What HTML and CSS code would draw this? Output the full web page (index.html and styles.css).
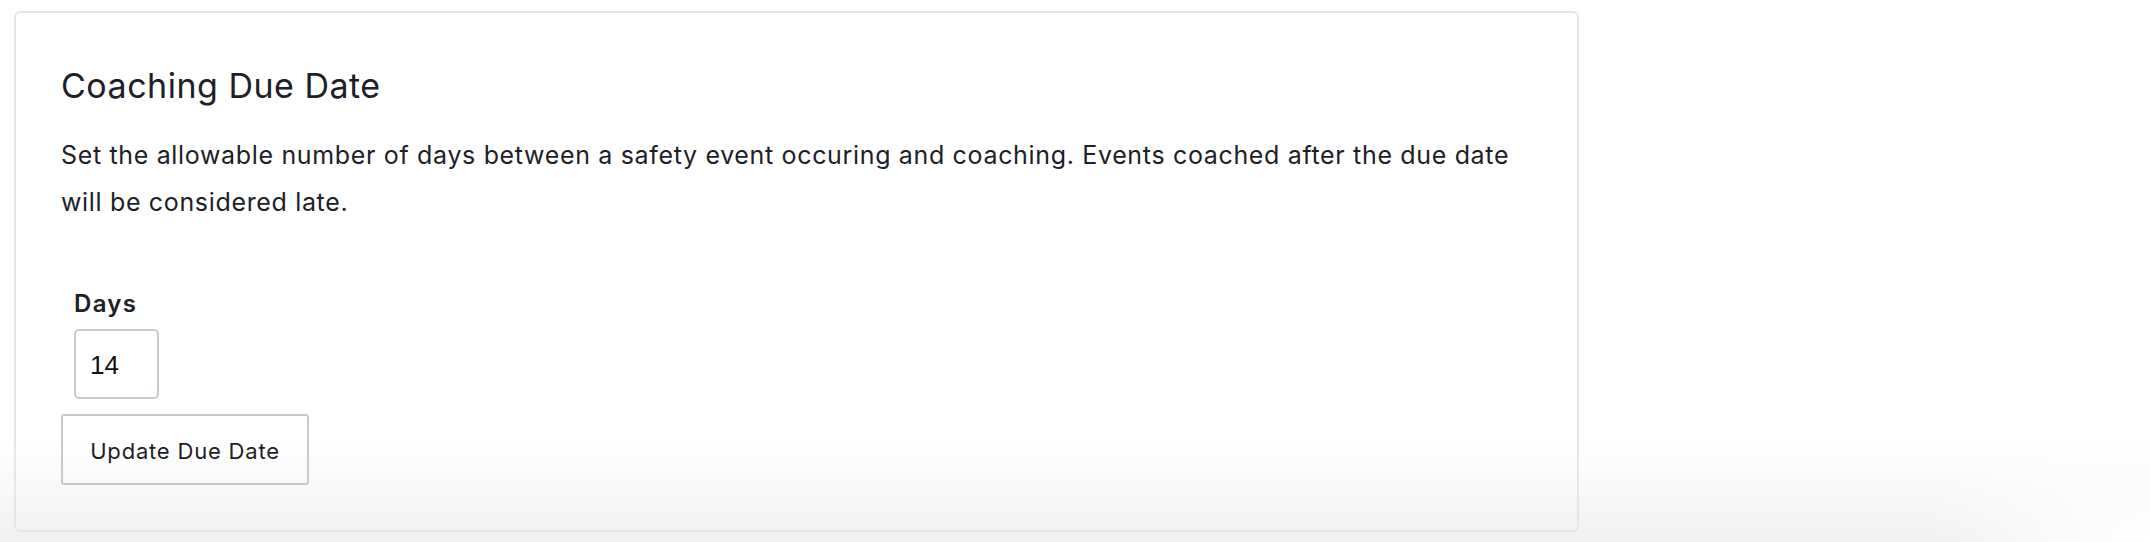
FILE: index.html
```html
<!DOCTYPE html>
<html lang="en">
<head>
<meta charset="utf-8">
<title>Coaching Due Date</title>
<link rel="stylesheet" href="styles.css">
</head>
<body>
  <main class="page">
    <section class="card">
      <h2 class="card-title">Coaching Due Date</h2>
      <p class="card-desc">Set the allowable number of days between a safety event occuring and coaching. Events coached after the due date will be considered late.</p>
      <div class="field">
        <label class="field-label" for="days">Days</label>
        <input class="field-input" id="days" type="text" value="14">
      </div>
      <button class="btn" type="button">Update Due Date</button>
    </section>
  </main>
</body>
</html>
```

FILE: styles.css
```css
html {
  height: 100%;
}

body {
  margin: 0;
  min-height: 542px;
  font-family: Inter, Roboto, "Liberation Sans", Arial, sans-serif;
  color: #1d2127;
  background:
    radial-gradient(ellipse 230px 130px at 100% 100%, #ffffff 0%, rgba(255,255,255,0) 100%),
    linear-gradient(to bottom, #ffffff 0, #ffffff 440px, #f1f1f1 542px);
  background-repeat: no-repeat;
  background-size: 100% 542px;
}

.page {
  padding: 11px 0 0 14px;
}

.card {
  box-sizing: border-box;
  width: 1565px;
  border: 2px solid #e3e6ea;
  border-radius: 6px;
  padding: 53px 45px 45px 45px;
  display: flex;
  flex-direction: column;
  align-items: flex-start;
}

.card-title {
  margin: 0;
  font-size: 34px;
  line-height: 40px;
  font-weight: 400;
  letter-spacing: 0.5px;
}

.card-desc {
  margin: 26px 0 0 0;
  font-size: 25px;
  line-height: 47px;
  font-weight: 400;
  letter-spacing: 0.66px;
}

.field {
  margin: 63px 0 0 13px;
  display: flex;
  flex-direction: column;
  align-items: flex-start;
  gap: 10px;
}

.field-label {
  font-size: 24px;
  line-height: 30px;
  font-weight: 600;
  letter-spacing: 1.3px;
}

.field-input {
  box-sizing: border-box;
  width: 85px;
  height: 70px;
  border: 2px solid #c4cad3;
  border-radius: 5px;
  padding: 2px 0 0 14px;
  font-family: "Liberation Sans", Arial, sans-serif;
  font-size: 26px;
  color: #111;
  background: transparent;
  outline: none;
}

.btn {
  box-sizing: border-box;
  margin-top: 15px;
  width: 248px;
  height: 71px;
  border: 2px solid #c4cad3;
  border-radius: 3px;
  background: transparent;
  padding: 3px 0 0 0;
  font-family: Inter, Roboto, "Liberation Sans", Arial, sans-serif;
  font-size: 22px;
  letter-spacing: 0.8px;
  color: #1d2127;
}
```
